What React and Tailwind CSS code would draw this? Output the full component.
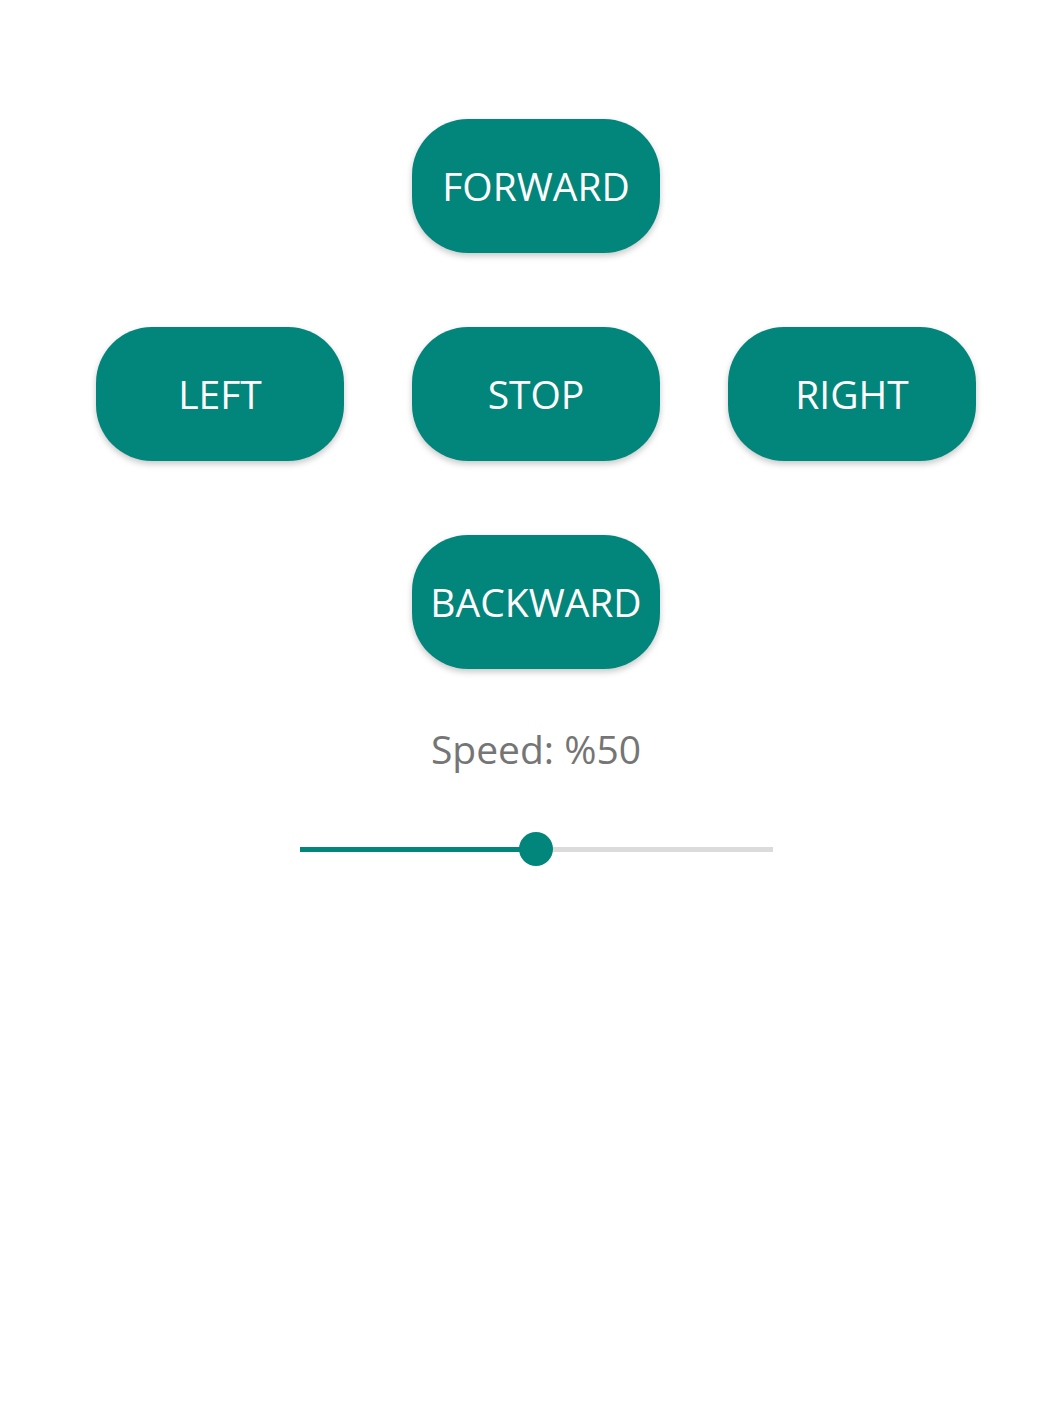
import React, { useState } from "react";

const btn =
  "w-[248px] h-[134px] rounded-[56px] bg-[#02857a] text-white text-[39px] shadow-[0_3px_6px_rgba(0,0,0,0.22)] flex items-center justify-center";

export default function App() {
  const [speed, setSpeed] = useState(50);

  return (
    <div
      className="min-h-[1407px] bg-white"
      style={{ fontFamily: "'Open Sans', sans-serif" }}
    >
      <div className="ml-[96px] w-[880px] pt-[119px] flex flex-col items-center">
        <button className={btn}>FORWARD</button>
        <div className="mt-[74px] w-full flex justify-between">
          <button className={btn}>LEFT</button>
          <button className={btn}>STOP</button>
          <button className={btn}>RIGHT</button>
        </div>
        <button className={btn + " mt-[74px]"}>BACKWARD</button>
        <p className="mt-[52px] text-[39px] text-[#757575] leading-[56px]">
          Speed: %{speed}
        </p>
        <div className="mt-[55px] w-[473px] h-[34px] relative flex items-center">
          <div className="w-full h-[5px] bg-[#dbdbdb]">
            <div className="h-full bg-[#02857a]" style={{ width: `${speed}%` }} />
          </div>
          <div
            className="absolute w-[34px] h-[34px] rounded-full bg-[#02857a] -translate-x-1/2"
            style={{ left: `${speed}%` }}
          />
        </div>
      </div>
    </div>
  );
}
